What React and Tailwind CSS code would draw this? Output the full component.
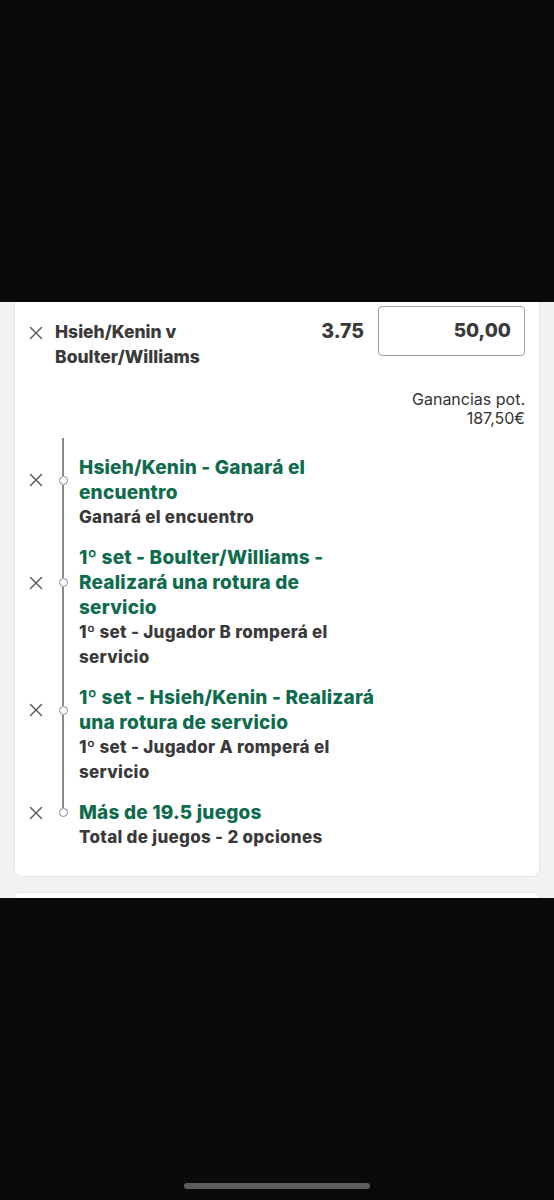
import React from "react";

const picks = [
    {
        title: "Hsieh/Kenin - Ganará el encuentro",
        sub: "Ganará el encuentro",
    },
    {
        title: "1º set - Boulter/Williams - Realizará una rotura de servicio",
        sub: "1º set - Jugador B romperá el servicio",
    },
    {
        title: "1º set - Hsieh/Kenin - Realizará una rotura de servicio",
        sub: "1º set - Jugador A romperá el servicio",
    },
    {
        title: "Más de 19.5 juegos",
        sub: "Total de juegos - 2 opciones",
    },
];

function Cross() {
    return (
        <svg width="14" height="14" viewBox="0 0 14 14" className="block">
            <path
                d="M1.5 1.5L12.5 12.5M12.5 1.5L1.5 12.5"
                stroke="#555"
                strokeWidth="1.4"
                strokeLinecap="round"
            />
        </svg>
    );
}

function Pick({ pick, last }) {
    return (
        <div className="grid grid-cols-[26px_16px_1fr]">
            {/* title row */}
            <div className="flex items-center">
                <Cross />
            </div>
            <div className="flex flex-col items-center">
                <div className="flex-1 w-[1.5px] bg-[#8a8a8a]" />
                <div className="w-[9px] h-[9px] rounded-full border-[1.5px] border-[#8a8a8a] bg-white shrink-0" />
                <div className={`flex-1 w-[1.5px] ${last ? "bg-transparent" : "bg-[#8a8a8a]"}`} />
            </div>
            <div className="pl-2 max-w-[308px] text-[19px] leading-[25px] tracking-[0.2px] font-extrabold text-[#0f6b4d]">
                {pick.title}
            </div>
            {/* subtitle row */}
            <div />
            <div className="flex justify-center">
                <div className={`w-[1.5px] ${last ? "bg-transparent" : "bg-[#8a8a8a]"}`} />
            </div>
            <div className={`pl-2 max-w-[308px] text-[17px] leading-[25px] tracking-[0.3px] font-extrabold text-[#3a3a3a] ${last ? "" : "pb-[15px]"}`}>
                {pick.sub}
            </div>
        </div>
    );
}

export default function App() {
    return (
        <div
            className="w-[554px] h-[1200px] bg-[#0a0a0a] flex flex-col overflow-hidden"
            style={{ fontFamily: "Inter, 'Liberation Sans', sans-serif" }}
        >
            <div className="h-[302px] shrink-0" />
            <div className="h-[596px] shrink-0 bg-[#f2f2f2] px-[14px] flex flex-col gap-[15px]">
                <div className="h-[575px] shrink-0 bg-white rounded-b-[8px] px-[14px] pt-[4px] border-x border-b border-[#e6e6e6]">
                    {/* header */}
                    <div className="flex items-start">
                        <div className="w-[26px] pt-[20px]">
                            <Cross />
                        </div>
                        <div className="flex-1 pt-[13px] text-[17.5px] leading-[25px] font-extrabold text-[#3a3a3a]">
                            Hsieh/Kenin v
                            <br />
                            Boulter/Williams
                        </div>
                        <div className="pt-[13px] pr-[14px] text-[19.5px] leading-[25px] font-extrabold text-[#3a3a3a]">
                            3.75
                        </div>
                        <div className="w-[147px] h-[50px] rounded-[4px] border border-[#a0a0a0] flex items-center justify-end pr-[13px] text-[19px] font-extrabold text-[#3a3a3a]">
                            50,00
                        </div>
                    </div>
                    <div className="mt-[21px] text-right text-[16px] leading-[19px] text-[#333]">
                        <div>Ganancias pot.</div>
                        <div>187,50€</div>
                    </div>
                    {/* timeline */}
                    <div className="mt-[10px]">
                        <div className="grid grid-cols-[26px_16px_1fr] h-[17px]">
                            <div />
                            <div className="flex justify-center">
                                <div className="w-[1.5px] bg-[#8a8a8a]" />
                            </div>
                        </div>
                        {picks.map((p, i) => (
                            <Pick key={i} pick={p} last={i === picks.length - 1} />
                        ))}
                    </div>
                </div>
                <div className="flex-1 bg-white rounded-t-[8px] border-x border-t border-[#e6e6e6]" />
            </div>
            <div className="flex-1 flex items-end justify-center pb-[11px]">
                <div className="w-[186px] h-[6px] rounded-full bg-[#5c5c5c]" />
            </div>
        </div>
    );
}
